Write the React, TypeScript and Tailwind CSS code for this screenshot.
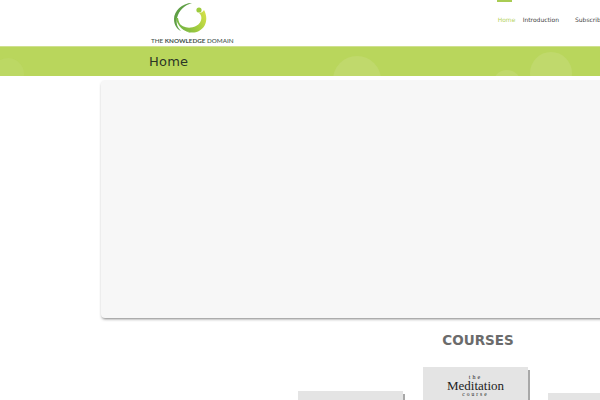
const navItems = [
  { label: "Home", active: true },
  { label: "Introduction", active: false },
  { label: "Subscribe", active: false },
];

function Logo() {
  return (
    <svg width="34" height="33" viewBox="0 0 34 33" fill="none" className="block">
      <defs>
        <linearGradient id="swirl" x1="4" y1="26" x2="32" y2="12" gradientUnits="userSpaceOnUse">
          <stop offset="0" stopColor="#6fb043" />
          <stop offset="0.6" stopColor="#a9d03f" />
          <stop offset="1" stopColor="#d5e04a" />
        </linearGradient>
      </defs>
      <path d="M18 2C8 2 0 10 0 18C0 24 3 28 7 30C3 26 2 22 3 17C5 9 11 4 18 2Z" fill="#5f9f45" />
      <path d="M2 17C3 25 10 31 18 32C11 30 5 25 4 17Z" fill="#7dbb45" />
      <path d="M30 9C34 16 33 26 25 30C17 34 8 30 4 21C8 27 16 28 22 25C28 22 29 15 25 12C27 12 29 11 30 9Z" fill="url(#swirl)" />
      <circle cx="25" cy="9" r="2.6" fill="#9ccb3c" />
    </svg>
  );
}

function CourseCard({ top, children }: { top: string; children?: React.ReactNode }) {
  return (
    <div className={`h-[120px] w-[105px] shrink-0 bg-[#e4e4e4] shadow-[2px_3px_0_#a8a8a8] ${top}`}>{children}</div>
  );
}

export default function App() {
  return (
    <div className="h-[400px] w-[600px] overflow-hidden bg-white font-['DejaVu_Sans',sans-serif]">
      <header className="flex h-[46px] bg-white">
        <div className="ml-[151px] flex w-[84px] flex-col items-center">
          <div className="mt-px -ml-[2px]">
            <Logo />
          </div>
          <span className="mt-[2px] whitespace-nowrap font-['Lato',sans-serif] text-[6.3px] leading-[9px] font-medium text-[#44524d]">
            THE <b className="font-bold">KNOWLEDGE</b> DOMAIN
          </span>
        </div>
        <nav className="ml-[264px] flex gap-[7px] text-[6px] whitespace-nowrap">
          {navItems.map((item) => (
            <a
              key={item.label}
              className={
                item.active
                  ? "flex w-[18px] flex-col items-start text-[#b5d35f]"
                  : item.label === "Subscribe"
                    ? "ml-[9px] pt-[16px] leading-[7px] text-[#444444]"
                    : "pt-[16px] leading-[7px] text-[#444444]"
              }
            >
              {item.active ? (
                <>
                  <span className="-ml-px h-[2px] w-[15px] bg-[#a9cc53]" />
                  <span className="mt-[14px] leading-[7px]">{item.label}</span>
                </>
              ) : (
                item.label
              )}
            </a>
          ))}
        </nav>
      </header>

      <div className="relative h-[30px] overflow-hidden border-t border-[#cfe08f] bg-[#b9d65c]">
        <svg width="600" height="30" className="absolute inset-0" fill="#c0d96c">
          <circle cx="8" cy="27" r="16" opacity="0.5" />
          <circle cx="357" cy="33" r="24" />
          <circle cx="507" cy="37" r="14" />
          <circle cx="551" cy="26" r="21" />
        </svg>
        <h1 className="relative pl-[149px] text-[13px] leading-[29px] font-normal tracking-[0.2px] text-[#2c3626]">Home</h1>
      </div>

      <main className="flex flex-col">
        <section className="mt-[4px] ml-[101px] h-[238px] w-[754px] shrink-0 rounded-[4px] bg-[#f7f7f7] shadow-[0_2px_3px_-1px_rgba(0,0,0,0.5)]" />
        <div className="ml-[101px] w-[754px]">
          <h2 className="mt-[14px] text-center text-[13.5px] leading-[16px] font-bold text-[#6b6b6b]">COURSES</h2>
          <div className="mt-[19px] ml-[197px] flex items-start gap-[20px]">
            <CourseCard top="mt-[24px]" />
            <CourseCard top="mt-0">
              <div className="flex flex-col items-center pt-[7px] font-['Liberation_Serif',serif] text-[#222222]">
                <span className="text-[6px] leading-[6px] tracking-[2px]">the</span>
                <span className="text-[13px] leading-[12px]">Meditation</span>
                <span className="text-[5.5px] leading-[5px] tracking-[2px]">course</span>
              </div>
            </CourseCard>
            <CourseCard top="mt-[26px]" />
          </div>
        </div>
      </main>
    </div>
  );
}
